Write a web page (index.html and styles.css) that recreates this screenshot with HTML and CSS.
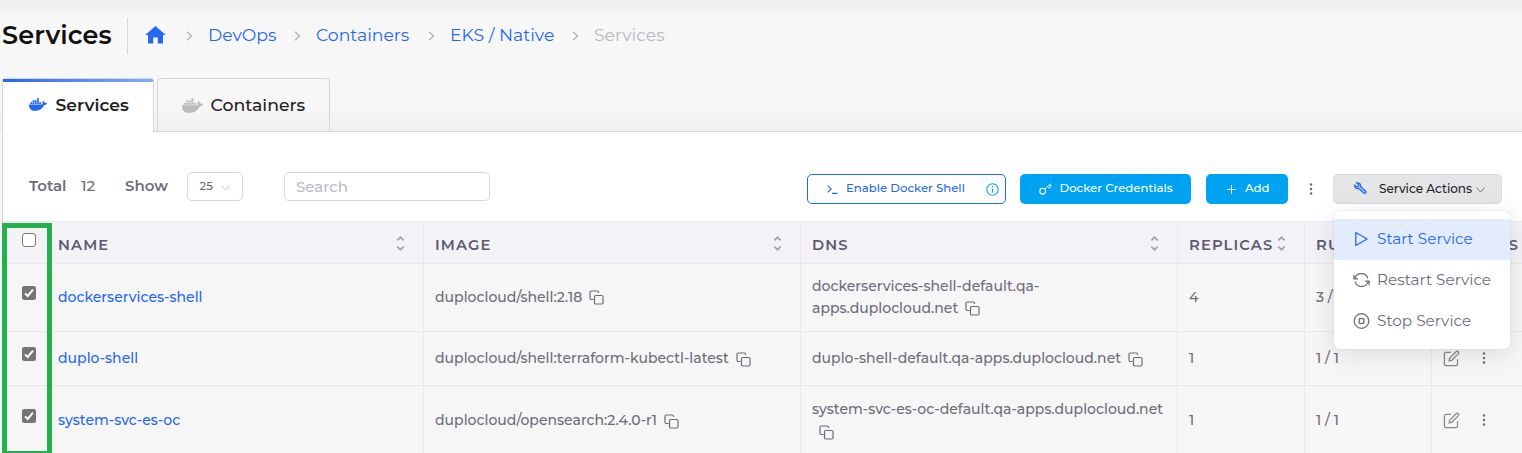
FILE: index.html
```html
<!DOCTYPE html>
<html lang="en">
<head>
<meta charset="utf-8">
<title>Services</title>
<link rel="stylesheet" href="styles.css">
</head>
<body>
<svg class="defs" width="0" height="0">
  <symbol id="chev" viewBox="0 0 7 10"><path d="M1 .8 5.5 5 1 9.2" fill="none" stroke="currentColor" stroke-width="1.4"/></symbol>
  <symbol id="copy" viewBox="0 0 15 15"><path d="M4.6 9.5H2.2Q1 9.500 1 8.300V2.200Q1 1 2.200 1H8.300Q9.500 1 9.500 2.200V3" fill="none" stroke="currentColor" stroke-width="1.200"/><rect x="5.500" y="5.500" width="8.500" height="8.500" rx="1.200" fill="none" stroke="currentColor" stroke-width="1.200"/></symbol>
  <symbol id="sort" viewBox="0 0 8 14"><path d="M1 4 4 1.200 7 4M1 10 4 12.800 7 10" fill="none" stroke="currentColor" stroke-width="1.600"/></symbol>
  <symbol id="dots" viewBox="0 0 4 12"><circle cx="2" cy="1.500" r="1.250"/><circle cx="2" cy="6" r="1.250"/><circle cx="2" cy="10.500" r="1.250"/></symbol>
  <symbol id="edit" viewBox="0 0 24 24"><path d="M11 3.500H4a2 2 0 0 0-2 2V20a2 2 0 0 0 2 2h14.500a2 2 0 0 0 2-2v-7M18.500 2.500a2.100 2.100 0 0 1 3 3L12.500 14.500l-4 1 1-4z" fill="none" stroke="currentColor" stroke-width="1.800" stroke-linejoin="round"/></symbol>
  <symbol id="check" viewBox="0 0 14 14"><rect width="14" height="14" rx="2.200" fill="#757575"/><path d="M3 7.400 5.700 10 11 3.700" fill="none" stroke="#fff" stroke-width="2"/></symbol>
  <symbol id="docker" viewBox="0 0 640 512"><path fill="currentColor" d="M349.900 236.300h-66.100v-59.400h66.100v59.400zm0-204.300h-66.100v60.700h66.100V32zm78.200 144.800H362v59.400h66.100v-59.400zm-156.300-72.100h-66.100v60.100h66.100v-60.100zm78.100 0h-66.100v60.100h66.100v-60.100zm276.800 100c-14.400-9.700-47.600-13.200-73.100-8.400-3.300-24-16.700-44.900-41.100-63.700l-14-9.300-9.300 14c-18.400 27.800-23.400 73.600-3.700 103.800-8.700 4.700-25.800 11.100-48.400 10.700H2.400c-8.700 50.800 5.800 116.800 44 162.100 37.100 43.900 92.700 66.200 165.400 66.200 157.400 0 273.900-72.500 328.400-204.200 21.400.4 67.600.1 91.300-45.200 1.500-2.500 6.600-13.200 8.500-17.100l-13.300-8.900zm-511.100-27.900h-66v59.400h66.100v-59.400zm78.100 0h-66.100v59.400h66.100v-59.400zm78.100 0h-66.100v59.400h66.100v-59.400zm-78.100-72.100h-66.100v60.100h66.100v-60.100z"/></symbol>
</svg>

<header class="top">
  <h1>Services</h1>
  <nav class="crumbs">
    <svg class="home" viewBox="0 0 21 18"><path fill="currentColor" d="M10.500 0 20.700 9H18v8.500h-5.200v-6H8.200v6H3V9H.3z"/></svg>
    <svg class="sep"><use href="#chev"/></svg><a class="c1">DevOps</a>
    <svg class="sep"><use href="#chev"/></svg><a class="c2">Containers</a>
    <svg class="sep"><use href="#chev"/></svg><a class="c3">EKS / Native</a>
    <svg class="sep"><use href="#chev"/></svg><span class="c4">Services</span>
  </nav>
</header>

<div class="tabs">
  <div class="tab active"><svg class="whale-sm"><use href="#docker"/></svg><span>Services</span></div>
  <div class="tab"><svg class="whale"><use href="#docker"/></svg><span>Containers</span></div>
</div>

<main class="panel">
  <div class="toolbar">
    <b class="total">Total</b><span class="count">12</span><b class="show">Show</b>
    <div class="pagesize"><span>25</span><svg viewBox="0 0 9 6"><path d="M.5.500 4.500 5 8.500.500" fill="none" stroke="currentColor"/></svg></div>
    <div class="search">Search</div>
    <div class="btn shell">
      <svg width="11" height="9" viewBox="0 0 11 9"><path d="M.6.600 4.200 4 .6 7.400M5 8.400h5.500" fill="none" stroke="currentColor" stroke-width="1.100"/></svg>
      <span>Enable Docker Shell</span>
      <svg class="info" width="13" height="13" viewBox="0 0 13 13"><circle cx="6.500" cy="6.500" r="5.700" fill="none" stroke="currentColor" stroke-width="1.100"/><path d="M6.500 5.500v4M6.500 3v1.300" stroke="currentColor" stroke-width="1.200"/></svg>
    </div>
    <div class="btn cred">
      <svg width="13" height="12" viewBox="0 0 13 12"><circle cx="3.700" cy="8.200" r="2.900" fill="none" stroke="currentColor" stroke-width="1.100"/><path d="M5.700 6.100 11.500.8M8.600 3.500l1.500 1.700 2.100-2L11 1.300" fill="none" stroke="currentColor"/></svg>
      <span>Docker Credentials</span>
    </div>
    <div class="btn add">
      <svg width="9" height="9" viewBox="0 0 9 9"><path d="M4.500 0v9M0 4.500h9" stroke="currentColor"/></svg>
      <span>Add</span>
    </div>
    <svg class="more"><use href="#dots"/></svg>
    <div class="actions">
      <div class="btn act">
        <svg width="13" height="12" viewBox="0 0 13 12"><path d="M2.600.9 4.700 2.800 4 4.500 2.300 4.900.8 3.200C.4 5.400 2.200 7 4.500 6.400L10 11.200Q11 11.800 11.800 11 12.500 10 11.700 9.200L6.600 4.500C7 2 5 .3 2.600.9Z" fill="#2468f2" fill-opacity=".3" stroke="#2468f2" stroke-width="1.200"/></svg>
        <span>Service Actions</span>
        <svg class="down" width="9" height="6" viewBox="0 0 9 6"><path d="M.5.500 4.500 5 8.500.500" fill="none" stroke="currentColor"/></svg>
      </div>
      <div class="menu">
        <div class="item on"><svg viewBox="0 0 16 16"><path d="M2.300 1.500v13L13.600 8z" fill="none" stroke="currentColor" stroke-width="1.300" stroke-linejoin="round"/></svg><span>Start Service</span></div>
        <div class="item"><svg viewBox="0 0 18 16"><path d="M1 2.500v4.300h4.300M17 13.500V9.200h-4.300M2 6.500A7 6.500 0 0 1 15.700 6.500M2.200 9.500A7 6.500 0 0 0 16 9.500" fill="none" stroke="currentColor" stroke-width="1.300"/></svg><span>Restart Service</span></div>
        <div class="item"><svg viewBox="0 0 16 16"><circle cx="8" cy="8" r="7.300" fill="none" stroke="currentColor" stroke-width="1.300"/><rect x="5.700" y="5.700" width="4.600" height="4.600" rx=".6" fill="none" stroke="currentColor" stroke-width="1.300"/></svg><span>Stop Service</span></div>
      </div>
    </div>
  </div>

  <div class="table">
    <div class="row head">
      <div class="sel"><i class="box"></i></div>
      <div class="cell"><b>NAME</b><svg class="sort"><use href="#sort"/></svg></div>
      <div class="cell"><b>IMAGE</b><svg class="sort"><use href="#sort"/></svg></div>
      <div class="cell"><b>DNS</b><svg class="sort"><use href="#sort"/></svg></div>
      <div class="cell"><b>REPLICAS</b><svg class="sort"><use href="#sort"/></svg></div>
      <div class="cell"><b>RUNNING</b></div>
      <div class="cell"><b>ACTIONS</b></div>
    </div>
    <div class="row r1">
      <div class="sel"><svg><use href="#check"/></svg></div>
      <div class="cell"><a>dockerservices-shell</a></div>
      <div class="cell"><span>duplocloud/shell:2.18</span><svg class="copy"><use href="#copy"/></svg></div>
      <div class="cell lines"><div><span>dockerservices-shell-default.qa-</span></div><div><span>apps.duplocloud.net</span><svg class="copy"><use href="#copy"/></svg></div></div>
      <div class="cell">4</div>
      <div class="cell">3 / 4</div>
      <div class="cell"></div>
    </div>
    <div class="row r2">
      <div class="sel"><svg><use href="#check"/></svg></div>
      <div class="cell"><a>duplo-shell</a></div>
      <div class="cell"><span>duplocloud/shell:terraform-kubectl-latest</span><svg class="copy"><use href="#copy"/></svg></div>
      <div class="cell"><span>duplo-shell-default.qa-apps.duplocloud.net</span><svg class="copy"><use href="#copy"/></svg></div>
      <div class="cell">1</div>
      <div class="cell">1 / 1</div>
      <div class="cell"><svg class="edit"><use href="#edit"/></svg><svg class="dots"><use href="#dots"/></svg></div>
    </div>
    <div class="row r3">
      <div class="sel"><svg><use href="#check"/></svg></div>
      <div class="cell"><a>system-svc-es-oc</a></div>
      <div class="cell"><span>duplocloud/opensearch:2.4.0-r1</span><svg class="copy"><use href="#copy"/></svg></div>
      <div class="cell lines"><div><span>system-svc-es-oc-default.qa-apps.duplocloud.net</span></div><div><svg class="copy"><use href="#copy"/></svg></div></div>
      <div class="cell">1</div>
      <div class="cell">1 / 1</div>
      <div class="cell"><svg class="edit"><use href="#edit"/></svg><svg class="dots"><use href="#dots"/></svg></div>
    </div>
    <div class="highlight"></div>
  </div>
</main>
</body>
</html>
```
FILE: styles.css
```css
* { box-sizing: border-box; }
html, body { height: 453px; overflow: hidden; }
body {
  margin: 0; width: 1522px; background: #f7f7f7; color: #6e6b7b;
  font: 500 14px/22px Montserrat, Inter, sans-serif;
}
svg { display: block; flex: none; }
.defs { position: absolute; }
span, b, a, h1 { white-space: nowrap; flex: none; }
b { font-weight: 600; }
a { color: #2468f2; }

.top { height: 78px; padding: 18px 0 0 2px; display: flex; align-items: flex-start; background: linear-gradient(#efefef, #f7f7f7 18px); }
h1 { margin: 0; width: 126px; height: 36px; border-right: 1px solid #d6d8dd; font-size: 25.5px; line-height: 34px; font-weight: 600; color: #111; letter-spacing: .13px; }
.crumbs { display: flex; align-items: center; height: 34px; font-size: 17.25px; font-weight: 400; padding-left: 17px; }
.home { width: 21px; height: 18px; color: #2468f2; margin-right: 4px; }
.sep { width: 7px; height: 10px; color: #b4b4ba; margin: 2px 15px 0 16px; }
.c1 { width: 70px; }
.c2 { width: 96px; }
.c3 { width: 106px; }
.c4 { color: #b9b9bf; }

.tabs { height: 53px; padding-left: 2px; display: flex; gap: 3px; background: linear-gradient(#f7f7f7 30px, #f0f0f0); }
.tab { display: flex; align-items: center; height: 53px; width: 173px; border: 1px solid #d6d6da; border-bottom: 0; border-radius: 4px 4px 0 0; font-size: 17.3px; color: #222; padding-left: 24px; }
.tab.active { width: 152px; height: 54px; background: #fff; padding: 0 0 2px 26px; font-weight: 600; font-size: 17.2px; position: relative; z-index: 1; }
.tab.active::before { content: ""; position: absolute; left: 0; right: 0; top: 0; height: 3px; background: linear-gradient(90deg, #2468f2, #86abfa); }
.whale-sm { width: 18px; height: 15px; color: #2468f2; margin-right: 8.5px; }
.whale { width: 21px; height: 17px; color: #b9b9be; margin-right: 7.5px; }

.panel { margin-left: 2px; height: 322px; background: #fff; border: solid #d6d6da; border-width: 1px 0 0 1px; }
.toolbar { height: 89px; display: flex; align-items: flex-start; padding: 40px 20px 0 26px; font-size: 15px; }
.total, .count, .show { line-height: 28px; }
.total { width: 52px; }
.count { width: 44px; }
.show { width: 62px; }
.pagesize { width: 56px; height: 29px; border: 1px solid #d8d6de; border-radius: 5px; display: flex; align-items: center; padding-left: 11.5px; font-size: 11.7px; gap: 8px; }
.pagesize span { margin-top: -1px; }
.pagesize svg { width: 9px; height: 6px; color: #c5c5cc; margin-top: 3px; }
.search { width: 206px; height: 29px; margin-left: 41px; border: 1px solid #d8d6de; border-radius: 5px; padding-left: 11px; line-height: 28px; color: #bcbac6; }
.btn { height: 30px; border-radius: 5px; display: flex; align-items: center; font-size: 11.7px; margin-top: 2px; color: #fff; }
.btn span { margin-top: -2px; }
.shell { margin-left: 317px; width: 199px; border: 1px solid #2468f2; color: #2468f2; padding-left: 19px; gap: 8px; }
.shell .info { color: #00a3f1; margin-left: auto; margin-right: 6px; }
.cred { margin-left: 14px; width: 171px; background: #00a3f1; padding-left: 19px; gap: 7.5px; }
.add { margin-left: 15px; width: 82px; background: #00a3f1; padding-left: 21px; gap: 9px; }
.more { width: 4px; height: 12px; margin: 11px 20.5px 0 20.5px; fill: #6e6b7b; }
.actions { position: relative; width: 169px; }
.act { background: #e4e5e7; border: 1px solid #dadbdd; color: #222; padding-left: 20px; font-size: 12px; }
.act svg:first-child { margin-top: -2px; }
.act span { margin: 0 4px 0 12px; }
.act .down { color: #777; margin-top: 2px; }
.menu { position: absolute; z-index: 3; left: 1px; top: 39px; width: 176px; height: 138px; padding-top: 8px; background: #fff; border-radius: 5px; box-shadow: 0 5px 25px rgba(34,41,47,.12), 0 0 1px rgba(34,41,47,.35); font-size: 15.25px; font-weight: 400; }
.item { height: 41px; display: flex; align-items: center; padding: 0 0 1px 19px; gap: 7px; }
.item svg { width: 17px; height: 16px; }
.item span { margin-top: -1px; }
.on { background: #e2ecfe; color: #2468f2; }

.table { position: relative; }
.row { display: grid; grid-template-columns: 45px 376px 377px 377px 127px 127px 90px; background: #f6f6f6; border-bottom: 1px solid #e9e8ef; letter-spacing: .03px; }
.head { height: 43px; background: #f3f2f7; border-top: 1px solid #e9e8ef; }
.r1 { height: 68px; }
.r2 { height: 54px; }
.r3 { height: 69px; }
.sel { border-right: 1px solid #e2e0ea; padding: 12px 0 0 19px; }
.sel svg, .box { display: block; width: 14px; height: 14px; }
.box { border: 1px solid #777; border-radius: 3px; background: #fff; }
.head .sel { padding-top: 11px; }
.r1 .sel { padding-top: 22px; }
.r2 .sel { padding-top: 15px; }
.r3 .sel { padding-top: 22.5px; }
.cell { display: flex; align-items: center; padding: 0 0 1px 10px; border-right: 1px solid #e9e8ef; }
.cell:nth-child(n+3) { padding-left: 11px; }
.cell:last-child { border-right: 0; }
.r1 .cell { padding-bottom: 2px; }
.r3 .cell { padding-bottom: 0; }
.head .cell { font-size: 14.7px; padding-top: 5px; padding-bottom: 0; color: #5e5873; }
.head b { letter-spacing: 1.15px; }
.sort { width: 9px; height: 15px; margin: -4px 18px 0 auto; color: #a3a0b0; }
.copy { width: 15px; height: 15px; margin: 2px 0 0 7px; }
.lines { flex-direction: column; justify-content: center; align-items: flex-start; }
.lines div { height: 22px; display: flex; align-items: center; }
.edit { width: 17px; height: 17px; color: #888; }
.dots { width: 4px; height: 12px; margin-left: 21.5px; fill: #6e6b7b; }
.highlight { position: absolute; left: -1px; top: 2px; width: 50px; height: 230px; border: 5px solid #24b14c; border-bottom-width: 2px; }
```
